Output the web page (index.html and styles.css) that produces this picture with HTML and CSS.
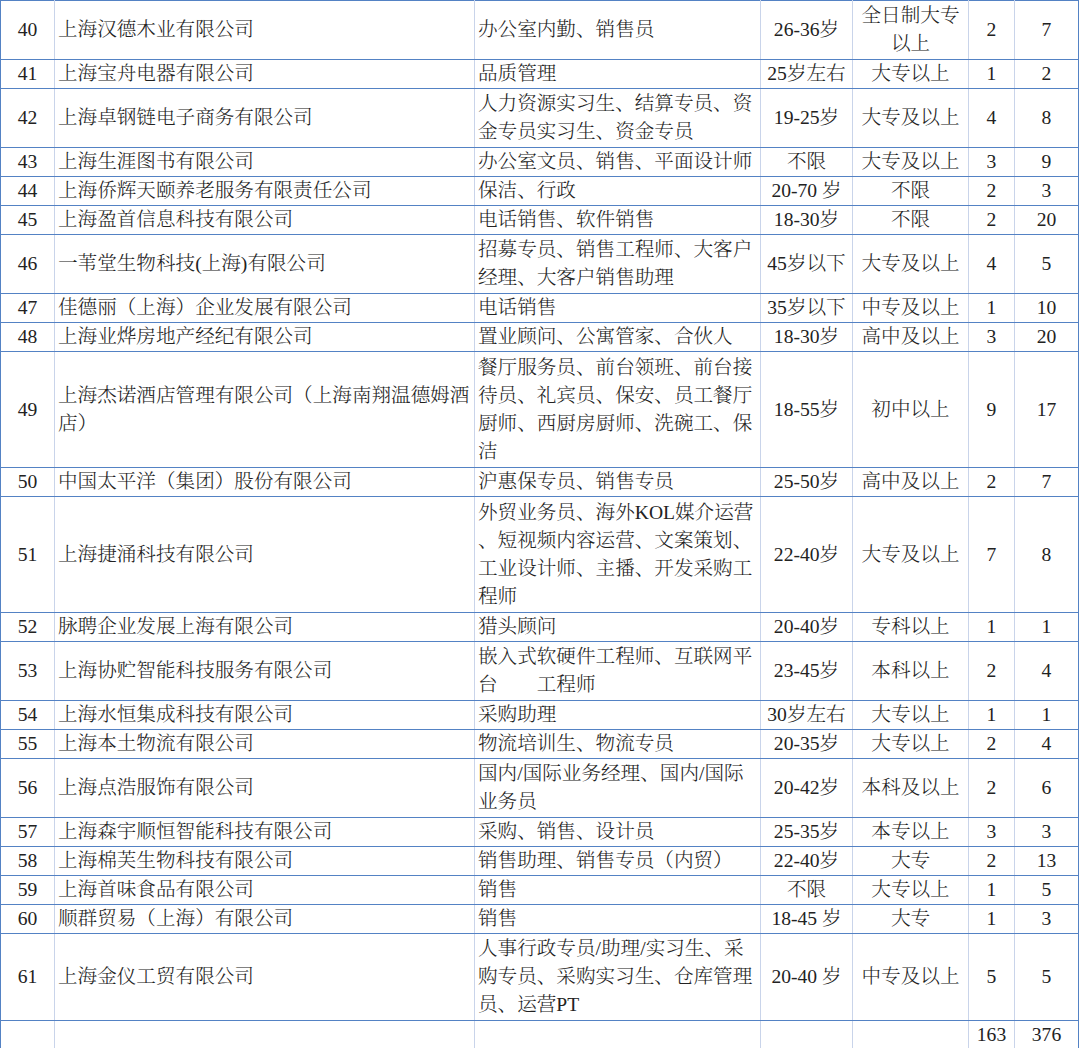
FILE: index.html
```html
<!DOCTYPE html>
<html lang="zh-CN">
<head>
<meta charset="utf-8">
<title>招聘信息</title>
<link rel="stylesheet" href="styles.css">
</head>
<body>
<table class="jobs">
  <colgroup>
    <col class="c-no"><col class="c-co"><col class="c-job"><col class="c-age"><col class="c-edu"><col class="c-n1"><col class="c-n2">
  </colgroup>
  <tbody>
    <tr class="l2"><td class="ctr">40</td><td>上海汉德木业有限公司</td><td>办公室内勤、销售员</td><td class="ctr">26-36岁</td><td class="ctr">全日制大专<br>以上</td><td class="ctr">2</td><td class="ctr">7</td></tr>
    <tr class="l1"><td class="ctr">41</td><td>上海宝舟电器有限公司</td><td>品质管理</td><td class="ctr">25岁左右</td><td class="ctr">大专以上</td><td class="ctr">1</td><td class="ctr">2</td></tr>
    <tr class="l2"><td class="ctr">42</td><td>上海卓钢链电子商务有限公司</td><td>人力资源实习生、结算专员、资<br>金专员实习生、资金专员</td><td class="ctr">19-25岁</td><td class="ctr">大专及以上</td><td class="ctr">4</td><td class="ctr">8</td></tr>
    <tr class="l1"><td class="ctr">43</td><td>上海生涯图书有限公司</td><td>办公室文员、销售、平面设计师</td><td class="ctr">不限</td><td class="ctr">大专及以上</td><td class="ctr">3</td><td class="ctr">9</td></tr>
    <tr class="l1"><td class="ctr">44</td><td>上海侨辉天颐养老服务有限责任公司</td><td>保洁、行政</td><td class="ctr">20-70 岁</td><td class="ctr">不限</td><td class="ctr">2</td><td class="ctr">3</td></tr>
    <tr class="l1"><td class="ctr">45</td><td>上海盈首信息科技有限公司</td><td>电话销售、软件销售</td><td class="ctr">18-30岁</td><td class="ctr">不限</td><td class="ctr">2</td><td class="ctr">20</td></tr>
    <tr class="l2"><td class="ctr">46</td><td>一苇堂生物科技(上海)有限公司</td><td>招募专员、销售工程师、大客户<br>经理、大客户销售助理</td><td class="ctr">45岁以下</td><td class="ctr">大专及以上</td><td class="ctr">4</td><td class="ctr">5</td></tr>
    <tr class="l1"><td class="ctr">47</td><td>佳德丽（上海）企业发展有限公司</td><td>电话销售</td><td class="ctr">35岁以下</td><td class="ctr">中专及以上</td><td class="ctr">1</td><td class="ctr">10</td></tr>
    <tr class="l1"><td class="ctr">48</td><td>上海业烨房地产经纪有限公司</td><td>置业顾问、公寓管家、合伙人</td><td class="ctr">18-30岁</td><td class="ctr">高中及以上</td><td class="ctr">3</td><td class="ctr">20</td></tr>
    <tr class="l4"><td class="ctr">49</td><td>上海杰诺酒店管理有限公司（上海南翔温德姆酒<br>店）</td><td>餐厅服务员、前台领班、前台接<br>待员、礼宾员、保安、员工餐厅<br>厨师、西厨房厨师、洗碗工、保<br>洁</td><td class="ctr">18-55岁</td><td class="ctr">初中以上</td><td class="ctr">9</td><td class="ctr">17</td></tr>
    <tr class="l1"><td class="ctr">50</td><td>中国太平洋（集团）股份有限公司</td><td>沪惠保专员、销售专员</td><td class="ctr">25-50岁</td><td class="ctr">高中及以上</td><td class="ctr">2</td><td class="ctr">7</td></tr>
    <tr class="l4"><td class="ctr">51</td><td>上海捷涌科技有限公司</td><td>外贸业务员、海外KOL媒介运营<br>、短视频内容运营、文案策划、<br>工业设计师、主播、开发采购工<br>程师</td><td class="ctr">22-40岁</td><td class="ctr">大专及以上</td><td class="ctr">7</td><td class="ctr">8</td></tr>
    <tr class="l1"><td class="ctr">52</td><td>脉聘企业发展上海有限公司</td><td>猎头顾问</td><td class="ctr">20-40岁</td><td class="ctr">专科以上</td><td class="ctr">1</td><td class="ctr">1</td></tr>
    <tr class="l2"><td class="ctr">53</td><td>上海协贮智能科技服务有限公司</td><td>嵌入式软硬件工程师、互联网平<br>台　　工程师</td><td class="ctr">23-45岁</td><td class="ctr">本科以上</td><td class="ctr">2</td><td class="ctr">4</td></tr>
    <tr class="l1"><td class="ctr">54</td><td>上海水恒集成科技有限公司</td><td>采购助理</td><td class="ctr">30岁左右</td><td class="ctr">大专以上</td><td class="ctr">1</td><td class="ctr">1</td></tr>
    <tr class="l1"><td class="ctr">55</td><td>上海本土物流有限公司</td><td>物流培训生、物流专员</td><td class="ctr">20-35岁</td><td class="ctr">大专以上</td><td class="ctr">2</td><td class="ctr">4</td></tr>
    <tr class="l2"><td class="ctr">56</td><td>上海点浩服饰有限公司</td><td>国内/国际业务经理、国内/国际<br>业务员</td><td class="ctr">20-42岁</td><td class="ctr">本科及以上</td><td class="ctr">2</td><td class="ctr">6</td></tr>
    <tr class="l1"><td class="ctr">57</td><td>上海森宇顺恒智能科技有限公司</td><td>采购、销售、设计员</td><td class="ctr">25-35岁</td><td class="ctr">本专以上</td><td class="ctr">3</td><td class="ctr">3</td></tr>
    <tr class="l1"><td class="ctr">58</td><td>上海棉芙生物科技有限公司</td><td>销售助理、销售专员（内贸）</td><td class="ctr">22-40岁</td><td class="ctr">大专</td><td class="ctr">2</td><td class="ctr">13</td></tr>
    <tr class="l1"><td class="ctr">59</td><td>上海首味食品有限公司</td><td>销售</td><td class="ctr">不限</td><td class="ctr">大专以上</td><td class="ctr">1</td><td class="ctr">5</td></tr>
    <tr class="l1"><td class="ctr">60</td><td>顺群贸易（上海）有限公司</td><td>销售</td><td class="ctr">18-45 岁</td><td class="ctr">大专</td><td class="ctr">1</td><td class="ctr">3</td></tr>
    <tr class="l3"><td class="ctr">61</td><td>上海金仪工贸有限公司</td><td>人事行政专员/助理/实习生、采<br>购专员、采购实习生、仓库管理<br>员、运营PT</td><td class="ctr">20-40 岁</td><td class="ctr">中专及以上</td><td class="ctr">5</td><td class="ctr">5</td></tr>
    <tr class="lt"><td></td><td></td><td></td><td></td><td></td><td class="ctr">163</td><td class="ctr">376</td></tr>
  </tbody>
</table>
</body>
</html>
```

FILE: styles.css
```css
html, body {
  margin: 0;
  padding: 0;
  background: #ffffff;
}

.jobs {
  border-collapse: collapse;
  table-layout: fixed;
  width: 1079px;
  font-family: "Liberation Serif", "Noto Serif CJK SC", "Noto Sans CJK SC", serif;
  font-size: 19.6px;
  font-weight: 300;
  color: #222222;
}

.c-no { width: 54px; }
.c-co { width: 420px; }
.c-job { width: 286px; }
.c-age { width: 92px; }
.c-edu { width: 116px; }
.c-n1 { width: 46px; }
.c-n2 { width: 64px; }

.jobs td {
  padding: 0 3px;
  line-height: 28px;
  white-space: nowrap;
  vertical-align: middle;
  text-align: left;
  border-left: 1px solid #c9d4ea;
  border-right: 1px solid #c9d4ea;
  border-top: 1px solid #5482c4;
  border-bottom: 1px solid #5482c4;
  overflow: hidden;
}

.jobs td:first-child {
  border-left: 1px solid #5482c4;
}

.jobs td:last-child {
  border-right: 1px solid #5482c4;
}

.jobs td.ctr {
  text-align: center;
  padding: 0 2px;
}

.l1 { height: 29px; }
.l2 { height: 59px; }
.l3 { height: 87px; }
.l4 { height: 116px; }
.lt { height: 25px; }
```
